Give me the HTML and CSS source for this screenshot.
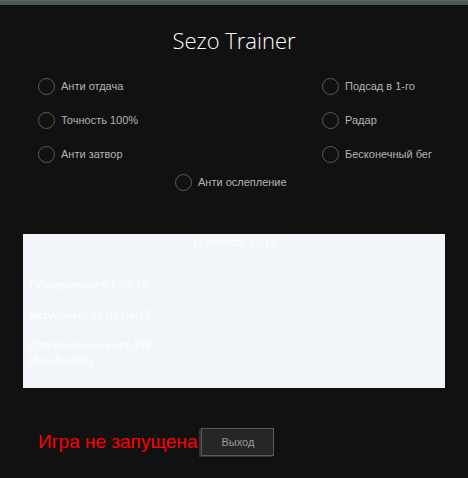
FILE: index.html
```html
<!DOCTYPE html>
<html lang="ru">
<head>
<meta charset="utf-8">
<title>Sezo Trainer</title>
<link rel="stylesheet" href="styles.css">
</head>
<body>
<div class="topbar"></div>
<h1 class="title">Sezo Trainer</h1>
<div class="options">
  <label class="opt"><span class="radio"></span>Анти отдача</label>
  <label class="opt"><span class="radio"></span>Подсад в 1-го</label>
  <label class="opt"><span class="radio"></span>Точность 100%</label>
  <label class="opt"><span class="radio"></span>Радар</label>
  <label class="opt"><span class="radio"></span>Анти затвор</label>
  <label class="opt"><span class="radio"></span>Бесконечный бег</label>
</div>
<div class="options-single">
  <label class="opt"><span class="radio"></span>Анти ослепление</label>
</div>
<div class="info">
  <div class="version">||Version 1.0||</div>
  <div class="line l-update">Обновление 01.04.17</div>
  <div class="line l-actual">Актуально от 01.04.17</div>
  <div class="line l-for">Для Вьетнамского WF</div>
  <div class="line">[Без банов]</div>
</div>
<div class="footer">
  <span class="status">Игра не запущена</span>
  <button class="exit">Выход</button>
</div>
</body>
</html>
```

FILE: styles.css
```css
html, body {
  margin: 0;
  padding: 0;
  background: #111111;
}
body {
  width: 468px;
  height: 478px;
  overflow: hidden;
  font-family: "Liberation Sans", Arial, sans-serif;
}
.topbar {
  height: 5px;
  background: #4f5759;
  border-top: 1px solid #5f6769;
  box-sizing: border-box;
}
.title {
  margin: 22px 0 0 0;
  height: 26px;
  line-height: 26px;
  text-align: center;
  font-family: "Open Sans", sans-serif;
  font-weight: 300;
  font-size: 22px;
  color: #ffffff;
}
.options {
  display: grid;
  grid-template-columns: 284px auto;
  row-gap: 14px;
  padding-left: 38px;
  margin-top: 23px;
}
.options-single {
  padding-left: 175px;
  margin-top: 8px;
}
.opt {
  display: flex;
  align-items: center;
  height: 20px;
  font-size: 11px;
  color: #b4b4b4;
}
.radio {
  width: 17px;
  height: 17px;
  box-sizing: border-box;
  border: 1.5px solid #5c5c5c;
  border-radius: 50%;
  margin-right: 6px;
  flex: none;
}
.info {
  margin: 42px 23px 0 23px;
  height: 154px;
  background: #f2f6fb;
  color: #ffffff;
  font-family: "Open Sans", sans-serif;
  font-size: 11.5px;
  line-height: 15px;
  padding: 0 6px;
  box-sizing: border-box;
}
.version {
  text-align: center;
}
.l-update { margin-top: 28px; }
.l-actual { margin-top: 15px; }
.l-for { margin-top: 15px; }
.footer {
  display: flex;
  align-items: center;
  margin-top: 40px;
  padding-left: 38px;
}
.status {
  color: #ff0000;
  font-size: 19px;
  line-height: 22px;
}
.exit {
  margin-left: 4px;
  width: 73px;
  height: 28px;
  background: #262626;
  border: 1px solid #5a5a5a;
  color: #9a9a9a;
  font-family: "Liberation Sans", Arial, sans-serif;
  font-size: 11px;
  padding: 0;
  box-shadow: -2px 1px 0 #333333;
}
```
